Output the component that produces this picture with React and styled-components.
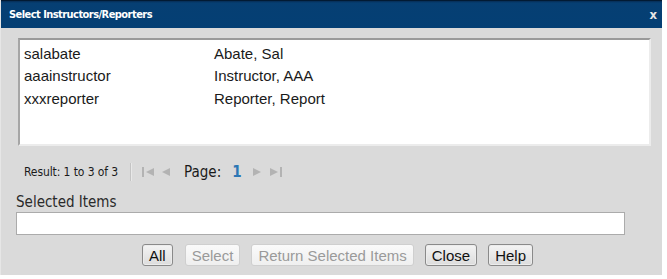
import React from 'react';
import styled, {createGlobalStyle} from 'styled-components';

const GlobalStyle = createGlobalStyle`
  html, body {
    margin: 0;
    padding: 0;
    background: #ffffff;
  }
`;

// Tahoma-like narrow face for the dialog chrome
const tahoma = `"DejaVu Sans Condensed", "DejaVu Sans", Verdana, sans-serif`;
const arial = `"Liberation Sans", Arial, sans-serif`;

const Dialog = styled.div`
  width: 662px;
  height: 275px;
  display: flex;
  flex-direction: column;
  background: #dadada;
  border-left: 1px solid #e6e6e6;
  box-sizing: border-box;
`;

const TitleBar = styled.div`
  height: 28px;
  flex: none;
  display: flex;
  align-items: center;
  justify-content: space-between;
  padding: 0 5px 0 8px;
  background: linear-gradient(#062c55 0, #063f73 2px, #043f74 100%);
  border-top: 1px solid #021a33;
  box-sizing: border-box;
`;

const Title = styled.span`
  font-family: ${tahoma};
  font-stretch: condensed;
  font-weight: bold;
  font-size: 11px;
  letter-spacing: -0.55px;
  color: #ffffff;
`;

const CloseX = styled.span`
  font-family: ${tahoma};
  font-stretch: condensed;
  font-weight: bold;
  font-size: 13px;
  color: #e6e6e6;
`;

const Body = styled.div`
  flex: 1;
  display: flex;
  flex-direction: column;
  padding: 10px 12px 0 15px;
`;

const ListBox = styled.div`
  margin-left: 2px;
  width: 633px;
  height: 108px;
  box-sizing: border-box;
  background: #ffffff;
  border-top: 2px solid #9a9a9a;
  border-left: 2px solid #a6a6a6;
  border-right: 2px solid #ececec;
  border-bottom: 2px solid #ececec;
  padding: 2px 0 0 4px;
`;

const Row = styled.div`
  display: grid;
  grid-template-columns: 190px 1fr;
  height: 22.5px;
  align-items: center;
  font-family: ${arial};
  font-size: 15px;
  color: #1a1a1a;
`;

const Pager = styled.div`
  display: flex;
  align-items: center;
  height: 20px;
  margin-top: 16px;
  padding-left: 8px;
`;

const ResultText = styled.span`
  font-family: ${tahoma};
  font-stretch: condensed;
  font-size: 12px;
  letter-spacing: -0.1px;
  color: #1a1a1a;
`;

const Divider = styled.span`
  width: 1px;
  height: 18px;
  background: #c4c4c4;
  border-right: 1px solid #e8e8e8;
  margin: 0 10px 0 12px;
`;

const NavIcon = styled.svg`
  display: block;
  flex: none;
  margin-right: ${p => p.$gap || 0}px;
`;

const PageLabel = styled.span`
  font-family: ${tahoma};
  font-stretch: condensed;
  font-size: 15px;
  color: #1a1a1a;
  margin: 0 11px 0 14px;
`;

const PageNum = styled.span`
  font-family: ${tahoma};
  font-stretch: condensed;
  font-weight: bold;
  font-size: 15px;
  color: #2c77b5;
  margin-right: 11px;
`;

const Label = styled.div`
  font-family: ${tahoma};
  font-stretch: condensed;
  font-size: 15px;
  color: #2a2a2a;
  margin-top: 12px;
  line-height: 17px;
`;

const TextInput = styled.div`
  width: 609px;
  height: 23px;
  box-sizing: border-box;
  background: #ffffff;
  border: 1px solid #ababab;
  margin-top: 1px;
`;

const ButtonRow = styled.div`
  display: flex;
  justify-content: center;
  gap: 11px;
  margin-top: 9px;
  padding-left: 9px;
`;

const Button = styled.button`
  height: 22px;
  padding: 0 6px;
  margin-right: ${p => p.$extra || 0}px;
  font-family: ${arial};
  font-size: 15px;
  border-radius: 3px;
  box-sizing: border-box;
  color: ${p => (p.disabled ? '#9a9a9a' : '#111111')};
  border: 1px solid ${p => (p.disabled ? '#cfcfcf' : '#8a8a8a')};
  background: ${p =>
    p.disabled
      ? 'linear-gradient(#fafafa, #efefef)'
      : 'linear-gradient(#f4f4f4, #dcdcdc)'};
  box-shadow: ${p => (p.disabled ? 'none' : 'inset 0 0 0 1px #ececec')};
`;

const rows = [
  ['salabate', 'Abate, Sal'],
  ['aaainstructor', 'Instructor, AAA'],
  ['xxxreporter', 'Reporter, Report']
];

const FirstIcon = () => (
  <NavIcon width="13" height="10" viewBox="0 0 13 10" $gap={6}>
    <rect x="0" y="0" width="2" height="10" fill="#b3b3b3" />
    <polygon points="12,1 4,5 12,9" fill="#b3b3b3" />
  </NavIcon>
);

const PrevIcon = () => (
  <NavIcon width="9" height="10" viewBox="0 0 9 10">
    <polygon points="9,1 1,5 9,9" fill="#b3b3b3" />
  </NavIcon>
);

const NextIcon = () => (
  <NavIcon width="9" height="10" viewBox="0 0 9 10" $gap={7}>
    <polygon points="0,1 8,5 0,9" fill="#b3b3b3" />
  </NavIcon>
);

const LastIcon = () => (
  <NavIcon width="13" height="10" viewBox="0 0 13 10">
    <polygon points="1,1 9,5 1,9" fill="#b3b3b3" />
    <rect x="11" y="0" width="2" height="10" fill="#b3b3b3" />
  </NavIcon>
);

export default function App() {
  return (
    <>
      <GlobalStyle />
      <Dialog>
        <TitleBar>
          <Title>Select Instructors/Reporters</Title>
          <CloseX>x</CloseX>
        </TitleBar>
        <Body>
          <ListBox>
            {rows.map(([user, name]) => (
              <Row key={user}>
                <span>{user}</span>
                <span>{name}</span>
              </Row>
            ))}
          </ListBox>
          <Pager>
            <ResultText>Result: 1 to 3 of 3</ResultText>
            <Divider />
            <FirstIcon />
            <PrevIcon />
            <PageLabel>Page:</PageLabel>
            <PageNum>1</PageNum>
            <NextIcon />
            <LastIcon />
          </Pager>
          <Label>Selected Items</Label>
          <TextInput />
          <ButtonRow>
            <Button $extra={1}>All</Button>
            <Button disabled>Select</Button>
            <Button disabled>Return Selected Items</Button>
            <Button>Close</Button>
            <Button>Help</Button>
          </ButtonRow>
        </Body>
      </Dialog>
    </>
  );
}
